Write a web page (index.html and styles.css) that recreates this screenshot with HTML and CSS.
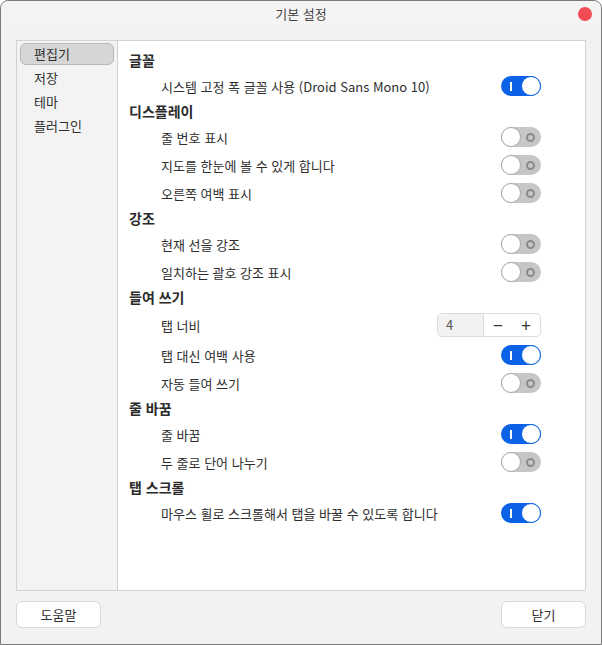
FILE: index.html
```html
<!DOCTYPE html>
<html lang="ko">
<head>
  <meta charset="UTF-8" />
  <title>기본 설정</title>
  <link rel="stylesheet" href="styles.css">
</head>
<body>
  <div class="window">
    <div class="titlebar">
      <span class="title">기본 설정</span>
      <span class="close"></span>
    </div>

    <div class="main">
      <ul class="sidebar">
        <li class="active">편집기</li>
        <li>저장</li>
        <li>테마</li>
        <li>플러그인</li>
      </ul>

      <div class="content">
        <h2>글꼴</h2>
        <div class="row"><span>시스템 고정 폭 글꼴 사용 (Droid Sans Mono 10)</span><span class="switch on"></span></div>

        <h2>디스플레이</h2>
        <div class="row"><span>줄 번호 표시</span><span class="switch"></span></div>
        <div class="row"><span>지도를 한눈에 볼 수 있게 합니다</span><span class="switch"></span></div>
        <div class="row"><span>오른쪽 여백 표시</span><span class="switch"></span></div>

        <h2>강조</h2>
        <div class="row"><span>현재 선을 강조</span><span class="switch"></span></div>
        <div class="row"><span>일치하는 괄호 강조 표시</span><span class="switch"></span></div>

        <h2>들여 쓰기</h2>
        <div class="row tall">
          <span>탭 너비</span>
          <div class="spin">
            <span class="spin-value">4</span>
            <span class="spin-btn">&minus;</span>
            <span class="spin-btn">+</span>
          </div>
        </div>
        <div class="row"><span>탭 대신 여백 사용</span><span class="switch on"></span></div>
        <div class="row"><span>자동 들여 쓰기</span><span class="switch"></span></div>

        <h2>줄 바꿈</h2>
        <div class="row"><span>줄 바꿈</span><span class="switch on"></span></div>
        <div class="row"><span>두 줄로 단어 나누기</span><span class="switch"></span></div>

        <h2>탭 스크롤</h2>
        <div class="row"><span>마우스 휠로 스크롤해서 탭을 바꿀 수 있도록 합니다</span><span class="switch on"></span></div>
      </div>
    </div>

    <div class="footer">
      <button>도움말</button>
      <button>닫기</button>
    </div>
  </div>
</body>
</html>
```

FILE: styles.css
```css
html, body {
  margin: 0;
  padding: 0;
  background: #ffffff;
}

body {
  font-family: "Noto Sans CJK KR", "Noto Sans", sans-serif;
  font-size: 13px;
  color: #2e2e2e;
}

.window {
  box-sizing: border-box;
  width: 602px;
  height: 645px;
  border: 1px solid #7a7a7a;
  border-radius: 8px 8px 0 0;
  background: #f2f2f2;
  display: flex;
  flex-direction: column;
}

.titlebar {
  position: relative;
  height: 25px;
  display: flex;
  align-items: center;
  justify-content: center;
  background: #f4f4f4;
  border-radius: 8px 8px 0 0;
}

.title {
  font-size: 13px;
  color: #444;
  margin-top: -1px;
}

.close {
  position: absolute;
  right: 9px;
  top: 6px;
  width: 14px;
  height: 14px;
  border-radius: 50%;
  background: #f24c57;
}

.main {
  display: flex;
  height: 551px;
  margin: 14px 15px 0 15px;
  border: 1px solid #d2d2d2;
  box-sizing: border-box;
}

.sidebar {
  list-style: none;
  margin: 0;
  padding: 2px 0 0 0;
  width: 100px;
  background: #f3f3f3;
  border-right: 1px solid #d2d2d2;
}

.sidebar li {
  height: 20px;
  line-height: 20px;
  margin: 0 3px 2px 3px;
  padding-left: 13px;
  border: 1px solid transparent;
  border-radius: 6px;
}

.sidebar li.active {
  background: #d6d6d6;
  border-color: #b8b8b8;
}

.content {
  flex: 1;
  background: #ffffff;
  padding: 8px 44px 0 11px;
}

.content h2 {
  margin: 0;
  height: 23px;
  line-height: 23px;
  font-size: 14px;
  font-weight: bold;
  color: #2a2a2a;
}

.row {
  display: flex;
  align-items: center;
  justify-content: space-between;
  height: 28px;
  padding-left: 32px;
}

.row.tall {
  height: 32px;
}

.switch {
  position: relative;
  width: 40px;
  height: 20px;
  border-radius: 10px;
  background: #c6c6c6;
  flex-shrink: 0;
}

.switch::before {
  content: "";
  position: absolute;
  left: 0;
  top: 0;
  width: 18px;
  height: 18px;
  border-radius: 50%;
  background: #fff;
  border: 1px solid #a8a8a8;
}

.switch::after {
  content: "";
  position: absolute;
  box-sizing: border-box;
  width: 9px;
  height: 9px;
  top: 5.5px;
  right: 6px;
  border-radius: 50%;
  border: 2px solid #8a8a8a;
}

.switch.on {
  background: #0c62e6;
}

.switch.on::before {
  left: auto;
  right: 0;
  border-color: #0c62e6;
}

.switch.on::after {
  border: none;
  border-radius: 0;
  background: #ffffff;
  width: 2px;
  height: 9px;
  top: 6px;
  left: 9px;
  right: auto;
}

.spin {
  display: flex;
  width: 104px;
  height: 24px;
  border: 1px solid #dcdcdc;
  border-radius: 5px;
  box-sizing: border-box;
  overflow: hidden;
  background: #fff;
}

.spin-value {
  width: 46px;
  background: #f2f2f2;
  border-right: 1px solid #dcdcdc;
  padding-left: 8px;
  line-height: 22px;
  box-sizing: border-box;
  color: #555;
}

.spin-btn {
  flex: 1;
  text-align: center;
  line-height: 21px;
  font-size: 17px;
  color: #333;
}

.footer {
  display: flex;
  justify-content: space-between;
  padding: 10px 15px 0 15px;
}

.footer button {
  width: 85px;
  height: 27px;
  background: #fff;
  border: 1px solid #d8d8d8;
  border-radius: 6px;
  font-family: inherit;
  font-size: 13px;
  color: #2e2e2e;
}
```
